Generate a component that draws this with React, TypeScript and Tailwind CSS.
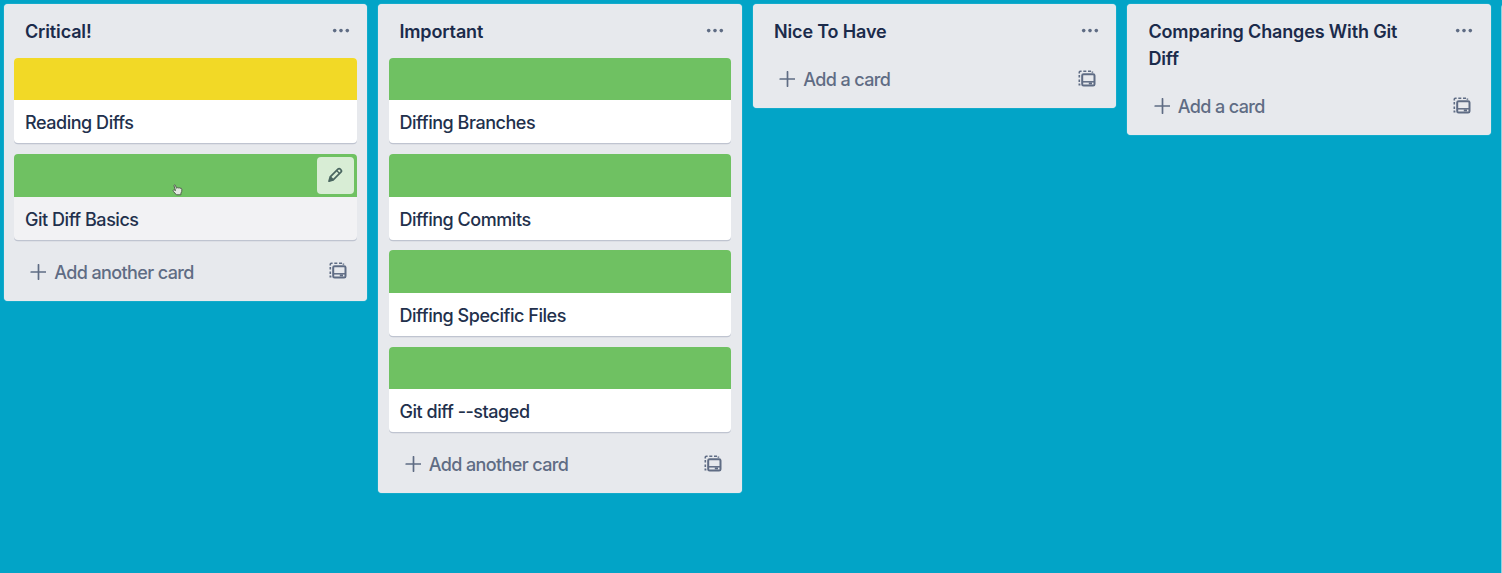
type Card = { title: string; cover: string; hovered?: boolean };
type List = { title: string; cards: Card[] };

const green = 'bg-[#6fc162]';
const yellow = 'bg-[#f2d926]';

const lists: List[] = [
  {
    title: 'Critical!',
    cards: [
      { title: 'Reading Diffs', cover: yellow },
      { title: 'Git Diff Basics', cover: green, hovered: true },
    ],
  },
  {
    title: 'Important',
    cards: [
      { title: 'Diffing Branches', cover: green },
      { title: 'Diffing Commits', cover: green },
      { title: 'Diffing Specific Files', cover: green },
      { title: 'Git diff --staged', cover: green },
    ],
  },
  { title: 'Nice To Have', cards: [] },
  { title: 'Comparing Changes With Git Diff', cards: [] },
];

function DotsIcon() {
  return (
    <svg className="h-[6px] w-[18px]" viewBox="0 0 18 6" fill="#5f6c84">
      <circle cx="2.7" cy="2.6" r="1.8" />
      <circle cx="9" cy="2.6" r="1.8" />
      <circle cx="15.3" cy="2.6" r="1.8" />
    </svg>
  );
}

function PlusIcon() {
  return (
    <svg className="size-4" viewBox="0 0 16 16" stroke="#5f6c84" strokeWidth="1.7" strokeLinecap="round">
      <path d="M8.5 .8v14.4M1.2 8h14.6" />
    </svg>
  );
}

function TemplateIcon() {
  return (
    <svg className="h-[17px] w-[18px]" viewBox="0 0 18 17" fill="none" stroke="#5f6c84">
      <path d="M1.3 3.4V2.3Q1.3 1.3 2.3 1.3H3.6M5.3 1.3H8.3M10 1.3H13M14.4 1.5V2.7M1.3 5V7.6M1.3 9.4V12M1.3 13.6V14.6H2.4" strokeWidth="1.6" />
      <rect x="4.2" y="4.2" width="12.3" height="11.4" rx="1.4" strokeWidth="2" />
      <path d="M4.3 11.8H16.3" strokeWidth="1.5" />
      <path d="M10.8 13.4H14" strokeWidth="2" />
    </svg>
  );
}

function PencilIcon() {
  return (
    <svg className="size-4" viewBox="0 0 16 16" fill="none" stroke="#4a6660" strokeWidth="1.7" strokeLinejoin="round">
      <path d="M3.2 9.9 10.9 2.2q1.2-1.2 2.4 0l.6.6q1.2 1.2 0 2.4L6.2 12.9" />
      <path d="M3.2 9.9 6.2 12.9 2 14.2Z" fill="#4a6660" />
      <path d="M9.6 3.5 12.6 6.5" strokeWidth="1.3" />
    </svg>
  );
}

function HandCursor() {
  return (
    <svg className="absolute left-[158px] top-[30px] h-3 w-[11px]" viewBox="0 0 11 12" fill="#e3e8e1" stroke="#53624f" strokeWidth="1" strokeLinejoin="round">
      <path d="M3.5 6.6 2 1.8Q1.9.8 2.7.8 3.3.8 3.6 1.8L4.5 4.2Q5.2 3.2 6.2 4 7.2 3.2 8 4.2 9.5 3.7 9.8 5.2 10.2 7.4 8.9 9.3V10.8H4.4L1.5 7.5Q.6 6.3 1.6 5.9 2.4 5.8 3.5 6.6Z" />
    </svg>
  );
}

function CardView({ card }: { card: Card }) {
  return (
    <article
      className={`relative mb-[10.7px] h-[85.6px] overflow-hidden rounded-[4px] shadow-[0_1.3px_0_#bfc4d0] ${card.hovered ? 'bg-[#f2f2f4]' : 'bg-white'}`}
    >
      <div className={`h-[42.8px] ${card.cover}`} />
      <div className="flex h-[42.8px] items-center px-[10.7px] pt-[2px]">
        <span className="text-[18px] font-[450] leading-[27px] tracking-[-0.46px] text-[#22304c]">{card.title}</span>
      </div>
      {card.hovered && (
        <>
          <HandCursor />
          <button className="absolute right-[2.7px] top-[2.7px] flex size-[37.4px] items-center justify-center rounded-[4px] bg-[#d8edd5]">
            <PencilIcon />
          </button>
        </>
      )}
    </article>
  );
}

function ListView({ list }: { list: List }) {
  return (
    <section className="w-[363.7px] shrink-0 rounded-[4px] bg-[#e7e9ed] px-[10.7px] shadow-[0_0_1px_#b9edf5]">
      <header className="flex items-start justify-between pb-[12.8px] pl-[10.7px] pr-[7px] pt-[13.7px]">
        <h2 className="w-[270px] text-[18px] font-semibold leading-[27px] tracking-[-0.14px] text-[#1b2b4b]">{list.title}</h2>
        <button className="pt-[9.9px]">
          <DotsIcon />
        </button>
      </header>
      {list.cards.map((card) => (
        <CardView key={card.title} card={card} />
      ))}
      <footer className="flex h-[50.4px] items-start justify-between pl-4 pr-[9.2px]">
        <button className="flex h-[43px] items-center gap-2 text-[18px] font-[450] tracking-[-0.62px] text-[#5f6c84]">
          <PlusIcon />
          <span className="pt-px">{list.cards.length > 0 ? 'Add another card' : 'Add a card'}</span>
        </button>
        <button className="flex h-[41px] items-center">
          <TemplateIcon />
        </button>
      </footer>
    </section>
  );
}

export default function App() {
  return (
    <main className="flex h-screen items-start gap-[10.8px] overflow-hidden bg-[#02a4c7] pl-[3.6px] pt-[4.2px] font-['Inter',sans-serif]">
      {lists.map((list) => (
        <ListView key={list.title} list={list} />
      ))}
      <div className="-ml-[0.8px] h-screen w-[363.7px] shrink-0 rounded-tl-[4px] bg-[#8fd2e2]" />
    </main>
  );
}
